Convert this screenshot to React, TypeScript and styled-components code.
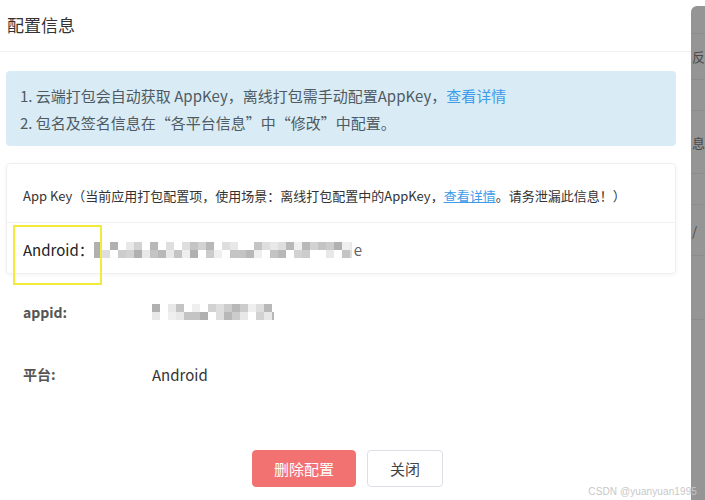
import React from 'react';
import styled, { createGlobalStyle } from 'styled-components';

const GlobalStyle = createGlobalStyle`
  html, body {
    margin: 0;
    padding: 0;
    background: #ffffff;
  }
  body {
    font-family: "Noto Sans CJK SC", "Noto Sans", sans-serif;
    color: #333;
  }
`;

const Page = styled.div`
  position: relative;
  display: flex;
  width: 705px;
  height: 500px;
  overflow: hidden;
`;

const Dialog = styled.div`
  width: 691px;
  flex-shrink: 0;
  display: flex;
  flex-direction: column;
  background: #fff;
`;

const Header = styled.div`
  height: 52px;
  box-sizing: border-box;
  display: flex;
  align-items: center;
  padding: 0 0 2px 7px;
  border-bottom: 1px solid #f0f0f0;
  font-size: 17px;
  color: #333;
  line-height: 1;
`;

const Body = styled.div`
  display: flex;
  flex-direction: column;
  padding: 19px 15px 0 6px;
`;

const Notice = styled.div`
  background: #d9ecf5;
  border-radius: 4px;
  padding: 11px 14px 10px;
  font-size: 15px;
  line-height: 27px;
  color: #4f5a63;
`;

const Link = styled.a<{ underline?: boolean }>`
  color: #3d9be9;
  text-decoration: ${(p) => (p.underline ? 'underline' : 'none')};
  cursor: pointer;
`;

const Card = styled.div`
  margin-top: 17px;
  border: 1px solid #f0f0f0;
  border-radius: 4px;
  box-shadow: 0 1px 4px rgba(0, 0, 0, 0.05);
`;

const CardHeader = styled.div`
  height: 59px;
  box-sizing: border-box;
  display: flex;
  align-items: center;
  padding: 4px 16px 0;
  font-size: 13px;
  color: #333;
  border-bottom: 1px solid #f0f0f0;
`;

const KeyRow = styled.div`
  position: relative;
  height: 50px;
  box-sizing: border-box;
  display: flex;
  align-items: center;
  padding: 3px 16px 0;
  font-size: 15px;
  color: #222;
`;

const Highlight = styled.div`
  position: absolute;
  left: 6px;
  top: 2px;
  width: 85px;
  height: 56px;
  border: 2px solid #f2eb3c;
  pointer-events: none;
`;

const Fields = styled.div`
  display: flex;
  flex-direction: column;
  padding-top: 7px;
`;

const Field = styled.div`
  display: flex;
  align-items: center;
  height: 62px;
  padding-left: 17px;
`;

const Label = styled.div`
  width: 129px;
  font-size: 14px;
  font-weight: bold;
  color: #555;
`;

const Value = styled.div`
  font-size: 15px;
  color: #333;
  display: flex;
  align-items: center;
`;

const Footer = styled.div`
  display: flex;
  gap: 11px;
  padding-left: 246px;
  margin-top: 45px;
`;

const Button = styled.button<{ danger?: boolean }>`
  height: 37px;
  padding: 0 ${(p) => (p.danger ? '21px' : '22px')};
  border-radius: 4px;
  font-family: inherit;
  font-size: 15px;
  border: 1px solid ${(p) => (p.danger ? '#f27272' : '#dcdfe6')};
  background: ${(p) => (p.danger ? '#f27272' : '#fff')};
  color: ${(p) => (p.danger ? '#fff' : '#444')};
  cursor: pointer;
`;

const Backdrop = styled.div`
  flex: 1;
  background: #959595;
  display: flex;
  flex-direction: column;
  overflow: hidden;
  border-top-left-radius: 6px;
  margin-top: 6px;
`;

const BackdropRow = styled.div<{ h: number }>`
  height: ${(p) => p.h}px;
  flex-shrink: 0;
  border-bottom: 1px solid #8c8c8c;
  display: flex;
  align-items: center;
  font-size: 13px;
  color: #4a4a4a;
  white-space: nowrap;
  padding-left: 1px;
`;

const Watermark = styled.div`
  position: absolute;
  right: 8px;
  bottom: 3px;
  font-family: "Liberation Sans", Arial, sans-serif;
  font-size: 10px;
  color: #c8c8c8;
  letter-spacing: 0.1px;
`;

const grays = ['#c4c4c4', '#d2d2d2', '#dedede', '#b8b8b8', '#e8e8e8', '#cccccc', '#efefef', '#b0b0b0'];

const Mosaic: React.FC<{ width: number; height: number; seed: number; cell?: number }> = ({
  width,
  height,
  seed,
  cell = 8,
}) => {
  const rects: React.ReactNode[] = [];
  let s = seed;
  const rnd = () => {
    s = (s * 9301 + 49297) % 233280;
    return s / 233280;
  };
  for (let y = 0; y < height; y += cell) {
    for (let x = 0; x < width; x += cell) {
      if (rnd() < 0.2) continue;
      rects.push(
        <rect key={`${x}-${y}`} x={x} y={y} width={cell} height={cell} fill={grays[Math.floor(rnd() * grays.length)]} />
      );
    }
  }
  return (
    <svg width={width} height={height} viewBox={`0 0 ${width} ${height}`}>
      {rects}
    </svg>
  );
};

const Tail = styled.span`
  color: #666;
  margin-left: 2px;
`;

export default function App() {
  return (
    <>
      <GlobalStyle />
      <Page>
        <Dialog>
          <Header>配置信息</Header>
          <Body>
            <Notice>
              <div>
                1. 云端打包会自动获取 AppKey，离线打包需手动配置AppKey，<Link>查看详情</Link>
              </div>
              <div>2. 包名及签名信息在“各平台信息”中“修改”中配置。</div>
            </Notice>
            <Card>
              <CardHeader>
                App Key（当前应用打包配置项，使用场景：离线打包配置中的AppKey，
                <Link underline>查看详情</Link>。请务泄漏此信息！）
              </CardHeader>
              <KeyRow>
                Android：
                <Mosaic width={258} height={16} seed={17} />
                <Tail>e</Tail>
                <Highlight />
              </KeyRow>
            </Card>
            <Fields>
              <Field>
                <Label>appid:</Label>
                <Value>
                  <Mosaic width={122} height={16} seed={41} />
                </Value>
              </Field>
              <Field>
                <Label>平台:</Label>
                <Value>Android</Value>
              </Field>
            </Fields>
            <Footer>
              <Button danger>删除配置</Button>
              <Button>关闭</Button>
            </Footer>
          </Body>
        </Dialog>
        <Backdrop>
          <BackdropRow h={27} />
          <BackdropRow h={45}>反</BackdropRow>
          <BackdropRow h={30} />
          <BackdropRow h={62}>息</BackdropRow>
          <BackdropRow h={30} />
          <BackdropRow h={50}>/</BackdropRow>
          <BackdropRow h={63} />
          <BackdropRow h={200} />
        </Backdrop>
        <Watermark>CSDN @yuanyuan1995</Watermark>
      </Page>
    </>
  );
}
